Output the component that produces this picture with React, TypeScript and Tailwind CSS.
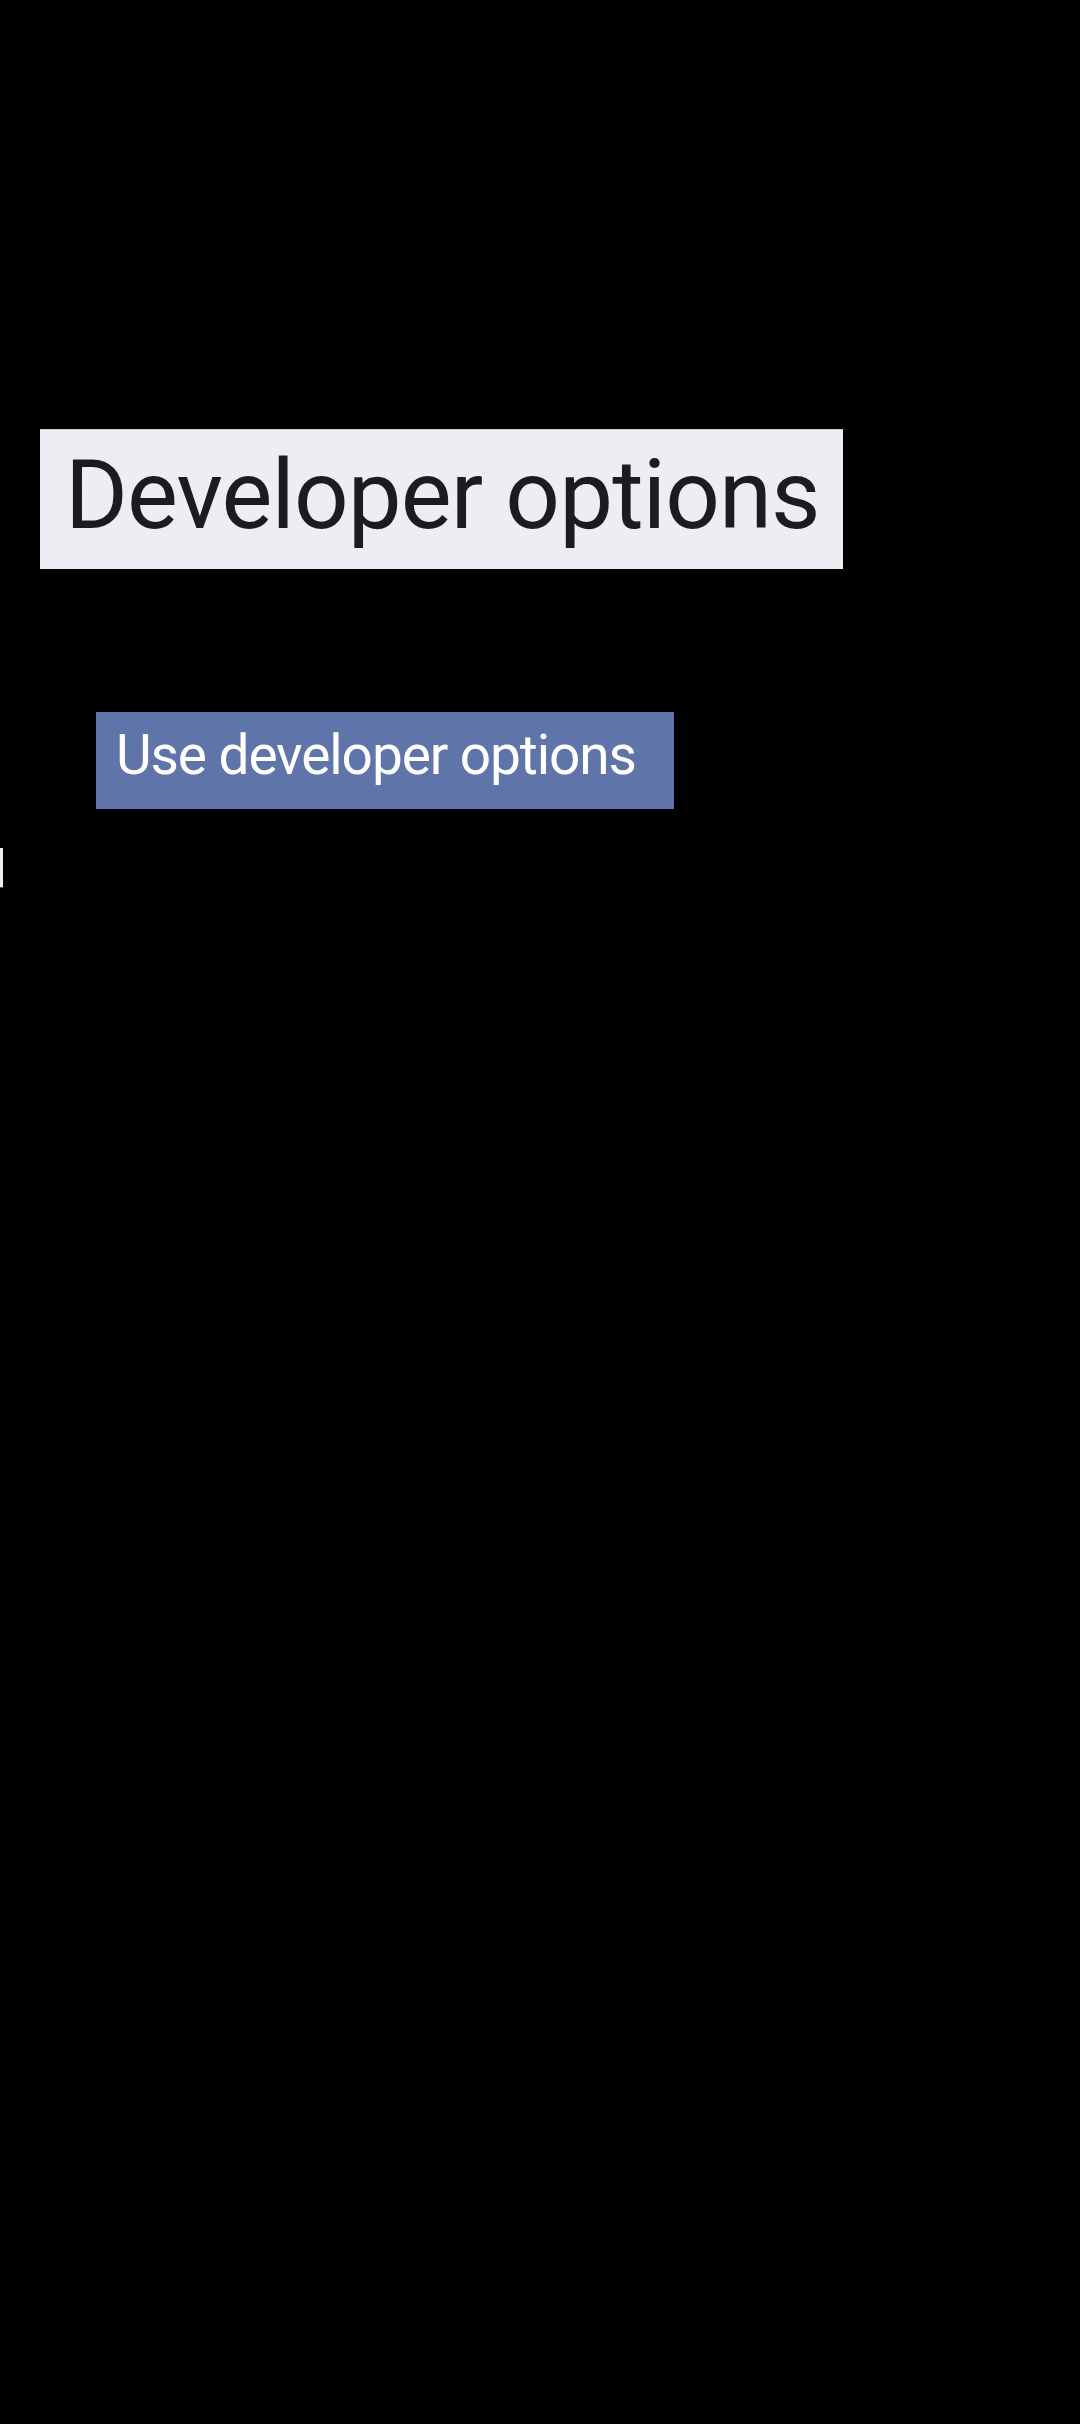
export default function App() {
  return (
    <div className="min-h-[2424px] w-[1080px] bg-black font-['Roboto',sans-serif]">
      <div className="h-[429px]" />
      <div className="ml-[40px] flex h-[140px] w-[803px] items-center border-t border-[#c9c8cf] bg-[#eeedf3] pb-[10px] pl-[25px]">
        <span className="text-[96px] leading-none tracking-[-0.9px] text-[#1c1b1f]">Developer options</span>
      </div>
      <div className="h-[143px]" />
      <div className="ml-[96px] flex h-[97px] w-[578px] items-start bg-[#5f75aa] pl-[20px] pt-[8px]">
        <span className="text-[55px] leading-[70px] tracking-[-1.1px] text-white">Use developer options</span>
      </div>
      <div className="mt-[39px] h-[40px] w-[3px] border-b border-[#555] bg-[#eeedf3]" />
    </div>
  )
}
